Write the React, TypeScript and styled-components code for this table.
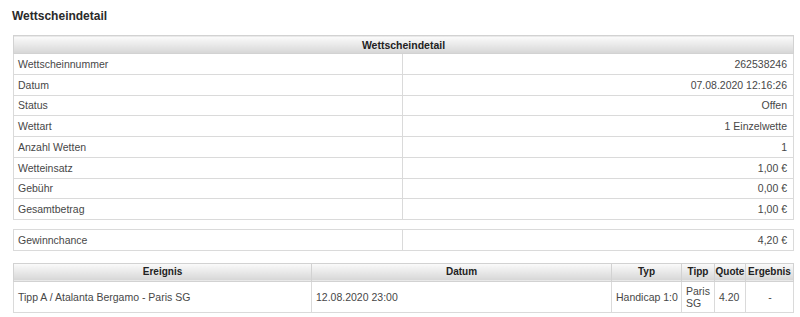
import React from "react";
import styled, { createGlobalStyle } from "styled-components";

const GlobalStyle = createGlobalStyle`
  html, body {
    margin: 0;
    padding: 0;
    background: #ffffff;
  }
  body {
    font-family: "Liberation Sans", Arial, sans-serif;
    color: #444444;
  }
`;

const Page = styled.div`
  padding: 9px 7px 0 13px;
  display: flex;
  flex-direction: column;
`;

const Title = styled.h1`
  margin: 0 0 12px -1px;
  font-size: 12px;
  line-height: 14px;
  font-weight: bold;
  color: #2a2a2a;
`;

const Table = styled.table<{ $gap?: number }>`
  width: 780px;
  border-collapse: collapse;
  table-layout: fixed;
  border: 1px solid #c4c4c4;
  margin-bottom: ${(p) => p.$gap ?? 0}px;
  font-size: 10.5px;
`;

const HeadCell = styled.th<{ $small?: boolean }>`
  height: 17px;
  padding: 0;
  border: 1px solid #d2d2d2;
  background: linear-gradient(#fbfbfb, #d6d6d6);
  color: #222222;
  font-weight: bold;
  font-size: ${(p) => (p.$small ? "10px" : "10.5px")};
  text-align: center;
  line-height: 12px;
  vertical-align: middle;
  white-space: nowrap;
`;

const Cell = styled.td<{ $align?: "left" | "right" | "center" }>`
  height: 19.75px;
  padding: 0 6px 0 4px;
  border: 1px solid #dadada;
  line-height: 12px;
  text-align: ${(p) => p.$align ?? "left"};
  vertical-align: middle;
  color: #474747;
`;

const EventCell = styled(Cell)`
  height: 30.5px;
  padding: 0 3px 0 4px;
`;

const detailRows: [string, string][] = [
  ["Wettscheinnummer", "262538246"],
  ["Datum", "07.08.2020 12:16:26"],
  ["Status", "Offen"],
  ["Wettart", "1 Einzelwette"],
  ["Anzahl Wetten", "1"],
  ["Wetteinsatz", "1,00 €"],
  ["Gebühr", "0,00 €"],
  ["Gesamtbetrag", "1,00 €"],
];

const eventColumns: { label: string; width: number }[] = [
  { label: "Ereignis", width: 298 },
  { label: "Datum", width: 300 },
  { label: "Typ", width: 70 },
  { label: "Tipp", width: 33 },
  { label: "Quote", width: 31 },
  { label: "Ergebnis", width: 48 },
];

export default function App() {
  return (
    <>
      <GlobalStyle />
      <Page>
        <Title>Wettscheindetail</Title>

        <Table $gap={9}>
          <colgroup>
            <col style={{ width: 389 }} />
            <col style={{ width: 391 }} />
          </colgroup>
          <thead>
            <tr>
              <HeadCell colSpan={2}>Wettscheindetail</HeadCell>
            </tr>
          </thead>
          <tbody>
            {detailRows.map(([label, value]) => (
              <tr key={label}>
                <Cell>{label}</Cell>
                <Cell $align="right">{value}</Cell>
              </tr>
            ))}
          </tbody>
        </Table>

        <Table $gap={12}>
          <colgroup>
            <col style={{ width: 389 }} />
            <col style={{ width: 391 }} />
          </colgroup>
          <tbody>
            <tr>
              <Cell>Gewinnchance</Cell>
              <Cell $align="right">4,20 €</Cell>
            </tr>
          </tbody>
        </Table>

        <Table>
          <colgroup>
            {eventColumns.map((c) => (
              <col key={c.label} style={{ width: c.width }} />
            ))}
          </colgroup>
          <thead>
            <tr>
              {eventColumns.map((c) => (
                <HeadCell key={c.label} $small>
                  {c.label}
                </HeadCell>
              ))}
            </tr>
          </thead>
          <tbody>
            <tr>
              <EventCell>Tipp A / Atalanta Bergamo - Paris SG</EventCell>
              <EventCell>12.08.2020 23:00</EventCell>
              <EventCell>Handicap 1:0</EventCell>
              <EventCell>Paris SG</EventCell>
              <EventCell>4.20</EventCell>
              <EventCell $align="center">-</EventCell>
            </tr>
          </tbody>
        </Table>
      </Page>
    </>
  );
}
